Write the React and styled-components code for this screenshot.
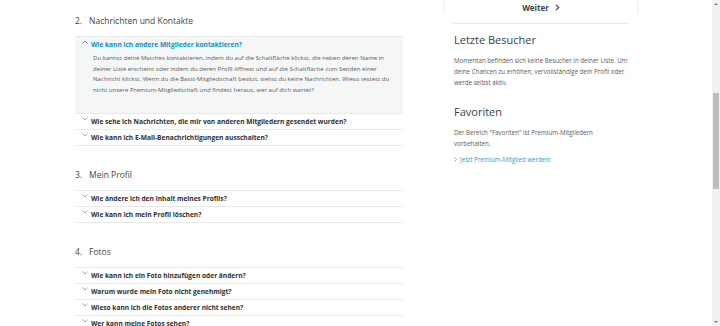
import React from 'react';
import styled, { createGlobalStyle } from 'styled-components';

const GlobalStyle = createGlobalStyle`
  html, body {
    margin: 0;
    padding: 0;
    background: #fff;
    font-family: 'Open Sans', 'Liberation Sans', sans-serif;
    overflow: hidden;
  }
`;

const Screen = styled.div`
  display: flex;
  width: 720px;
  height: 326px;
  overflow: hidden;
`;

const Page = styled.div`
  flex: 1;
  display: flex;
  padding-left: 75px;
  gap: 42px;
`;

const MainColumn = styled.div`
  width: 328px;
  padding-top: 14px;
`;

const Section = styled.section`
  margin-bottom: 22px;
`;

const SectionTitle = styled.h2`
  display: flex;
  gap: 7px;
  margin: 0 0 8px;
  font-size: 8.5px;
  line-height: 14px;
  font-weight: 400;
  color: #444;
`;

const List = styled.div`
  border-bottom: 1px solid #e6e9ea;
`;

const Item = styled.div`
  border-top: 1px solid #e6e9ea;
  background: ${(p) => (p.$open ? '#f5f7f7' : '#fff')};
  padding-bottom: ${(p) => (p.$open ? '17px' : '0')};
`;

const Question = styled.div`
  display: flex;
  align-items: center;
  height: 15px;
  padding-left: 7px;
  gap: 3px;
  font-size: 6.6px;
  font-weight: 700;
  color: ${(p) => (p.$open ? '#1192bd' : '#2f2f2f')};
`;

const Chevron = styled.svg`
  width: 6px;
  height: 4px;
  margin-top: -5px;
  flex: none;
`;

const Answer = styled.p`
  margin: 1px 0 0;
  padding: 0 10px 0 18px;
  font-size: 6.1px;
  line-height: 10.7px;
  color: #5a5a5a;
`;

const Side = styled.aside`
  width: 192px;
`;

const NextCard = styled.div`
  height: 15px;
  display: flex;
  justify-content: center;
  align-items: center;
  gap: 6px;
  box-shadow: 0 0 4px rgba(0, 0, 0, 0.12);
  clip-path: inset(0 -6px 0 -6px);
  font-size: 8px;
  font-weight: 700;
  color: #3c4048;
`;

const SideInner = styled.div`
  margin: 8px 8px 0;
  border-top: 1px solid #e2e4e5;
  padding: 0 1px;
`;

const SideTitle = styled.h3`
  margin: 9px 0 8px;
  font-size: 11px;
  line-height: 14px;
  font-weight: 400;
  color: #3c4048;
`;

const SideText = styled.p`
  margin: 0 0 ${(p) => p.$after || '17px'};
  font-size: 6.2px;
  line-height: 11px;
  color: #5a5a5a;
`;

const PremiumLink = styled.a`
  display: flex;
  align-items: center;
  gap: 3px;
  font-size: 6.2px;
  line-height: 11px;
  color: #2a9dc8;
  text-decoration: none;
`;

const ScrollTrack = styled.div`
  width: 8px;
  flex: none;
  background: #f1f1f1;
  display: flex;
  flex-direction: column;
  align-items: center;
  padding-top: 3px;
  box-sizing: border-box;
`;

const ScrollArrow = styled.div`
  width: 0;
  height: 0;
  border-left: 2px solid transparent;
  border-right: 2px solid transparent;
  ${(p) => (p.$down ? 'border-top: 2px solid #777;' : 'border-bottom: 2px solid #777;')}
`;

const ScrollThumb = styled.div`
  width: 6px;
  height: 96px;
  margin-top: 88px;
  background: #bdbdbd;
`;

const Spacer = styled.div`
  flex: 1;
`;

const ChevronIcon = ({ open }) => (
  <Chevron viewBox="0 0 6 4">
    <path
      d={open ? 'M0.5 3.5 L3 1 L5.5 3.5' : 'M0.5 0.5 L3 3 L5.5 0.5'}
      fill="none"
      stroke={open ? '#1192bd' : '#9a9a9a'}
      strokeWidth="0.9"
    />
  </Chevron>
);

const sections = [
  {
    no: '2.',
    title: 'Nachrichten und Kontakte',
    items: [
      {
        q: 'Wie kann ich andere Mitglieder kontaktieren?',
        a: 'Du kannst deine Matches kontaktieren, indem du auf die Schaltfläche klickst, die neben deren Name in deiner Liste erscheint oder indem du deren Profil öffnest und auf die Schaltfläche zum Senden einer Nachricht klickst. Wenn du die Basis-Mitgliedschaft besitzt, siehst du keine Nachrichten. Wieso testest du nicht unsere Premium-Mitgliedschaft und findest heraus, wer auf dich wartet?',
      },
      { q: 'Wie sehe ich Nachrichten, die mir von anderen Mitgliedern gesendet wurden?' },
      { q: 'Wie kann ich E-Mail-Benachrichtigungen ausschalten?' },
    ],
  },
  {
    no: '3.',
    title: 'Mein Profil',
    items: [
      { q: 'Wie ändere ich den Inhalt meines Profils?' },
      { q: 'Wie kann ich mein Profil löschen?' },
    ],
  },
  {
    no: '4.',
    title: 'Fotos',
    items: [
      { q: 'Wie kann ich ein Foto hinzufügen oder ändern?' },
      { q: 'Warum wurde mein Foto nicht genehmigt?' },
      { q: 'Wieso kann ich die Fotos anderer nicht sehen?' },
      { q: 'Wer kann meine Fotos sehen?' },
    ],
  },
];

const App = () => {
  return (
    <Screen>
      <GlobalStyle />
      <Page>
        <MainColumn>
          {sections.map((s) => (
            <Section key={s.no}>
              <SectionTitle>
                <span>{s.no}</span>
                <span>{s.title}</span>
              </SectionTitle>
              <List>
                {s.items.map((it) => (
                  <Item key={it.q} $open={!!it.a}>
                    <Question $open={!!it.a}>
                      <ChevronIcon open={!!it.a} />
                      {it.q}
                    </Question>
                    {it.a && <Answer>{it.a}</Answer>}
                  </Item>
                ))}
              </List>
            </Section>
          ))}
        </MainColumn>
        <Side>
          <NextCard>
            Weiter
            <svg width="5" height="7" viewBox="0 0 5 7">
              <path d="M1 0.8 L3.8 3.5 L1 6.2" fill="none" stroke="#3c4048" strokeWidth="1.1" />
            </svg>
          </NextCard>
          <SideInner>
            <SideTitle>Letzte Besucher</SideTitle>
            <SideText>
              Momentan befinden sich keine Besucher in deiner Liste. Um deine Chancen zu erhöhen,
              vervollständige dein Profil oder werde selbst aktiv.
            </SideText>
            <SideTitle>Favoriten</SideTitle>
            <SideText $after="5px">
              Der Bereich "Favoriten" ist Premium-Mitgliedern
              <br />
              vorbehalten.
            </SideText>
            <PremiumLink href="#">
              <svg width="3" height="5" viewBox="0 0 3 5">
                <path d="M0.5 0.5 L2.5 2.5 L0.5 4.5" fill="none" stroke="#2a9dc8" strokeWidth="0.7" />
              </svg>
              Jetzt Premium-Mitglied werden!
            </PremiumLink>
          </SideInner>
        </Side>
      </Page>
      <ScrollTrack>
        <ScrollArrow />
        <ScrollThumb />
        <Spacer />
        <ScrollArrow $down />
        <div style={{ height: 3 }} />
      </ScrollTrack>
    </Screen>
  );
};

export default App;
